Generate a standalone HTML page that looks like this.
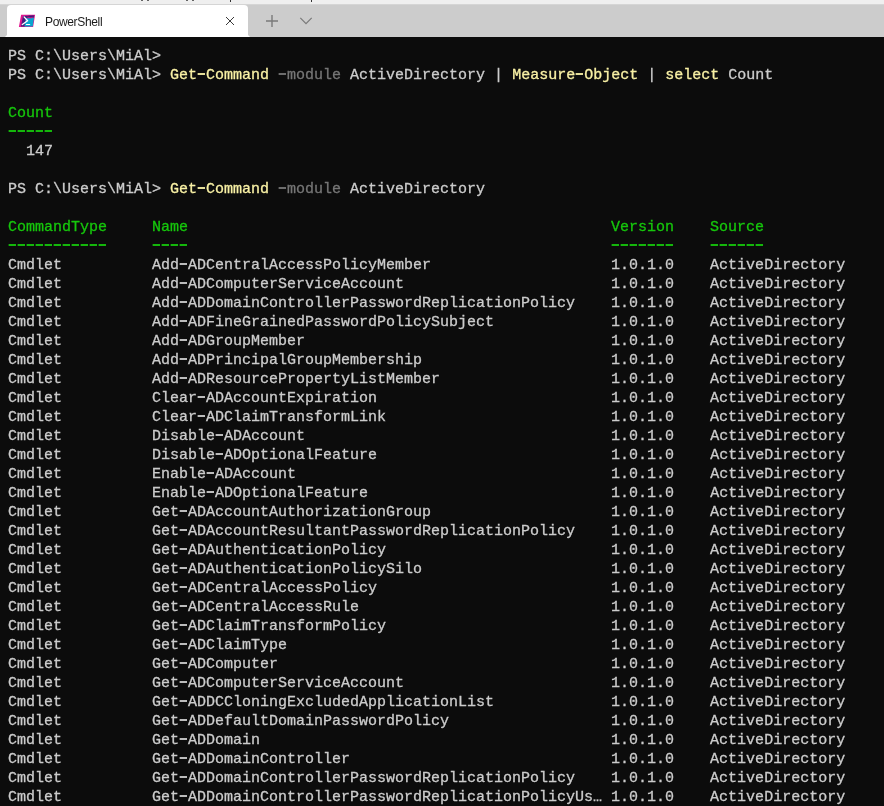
<!DOCTYPE html>
<html><head><meta charset="utf-8"><title>PowerShell</title>
<style>
html,body{margin:0;padding:0;}
body{width:884px;height:806px;overflow:hidden;background:#0c0c0c;position:relative;font-family:"Liberation Sans",sans-serif;}
#top{position:absolute;left:0;top:0;width:884px;height:4px;background:#efefef;}
#top i{position:absolute;top:0;width:2px;height:1px;background:#646464;}
#bar{position:absolute;left:0;top:4px;width:884px;height:33px;background:#cccccc;border-top:1px solid #d5d5d5;box-sizing:border-box;}
#tab{position:absolute;left:7px;top:5px;width:241px;height:32px;background:#fff;border-radius:4px 4px 0 0;}
#tab:before,#tab:after{content:"";position:absolute;bottom:0;width:3px;height:3px;}
#tab:before{left:-3px;background:radial-gradient(circle at 0 0,rgba(255,255,255,0) 2.6px,#fff 3.2px);}
#tab:after{right:-3px;background:radial-gradient(circle at 100% 0,rgba(255,255,255,0) 2.6px,#fff 3.2px);}
#title{will-change:transform;position:absolute;left:45px;top:14px;font-size:12px;line-height:16px;color:#1a1a1a;letter-spacing:-0.35px;}
svg{position:absolute;overflow:visible;}
#term{position:absolute;left:8px;top:47px;will-change:transform;width:876px;font-family:"Liberation Mono",monospace;font-size:15px;line-height:19px;color:#cccccc;white-space:pre;-webkit-text-stroke:0.3px;}
.r{height:19px;}
.h{display:inline-block;width:9px;height:19px;vertical-align:top;position:relative;}
.h:before{content:"";position:absolute;left:1px;top:7px;width:7px;height:2px;background:currentColor;opacity:.92;}
.h:after{content:"";position:absolute;left:0;top:7px;width:1px;height:2px;background:currentColor;opacity:.35;}
.y{color:#f9f1a5;}
.g{color:#767676;}
.gr{color:#16c60c;}
</style></head><body>
<div id="top"><i style="left:141px"></i><i style="left:147px"></i><i style="left:186px"></i><i style="left:192px"></i><i style="left:230px;height:2px;width:1px;background:#333"></i><i style="left:311px;height:2px;width:1px;background:#333"></i></div>
<div id="bar"></div>
<div id="tab"></div>
<svg id="icon" style="left:19px;top:15px" width="16" height="12" viewBox="0 0 16 12">
<path d="M2.1 -0.2 H16.1 L14.1 12 H-0.1 Z" fill="#e2168f"/>
<path d="M4.0 0.9 L15.2 0.5 L14.8 3 L7 3 L6 11.4 L1.9 11.4 Z" fill="#45207c"/>
<path d="M7 3 Q10.5 3.9 15.0 2.5 L13.7 11.5 L5.4 11.5 Z" fill="#0aa6cf"/>
<path d="M8.3 2.3 Q11 3.0 14.4 2.2" stroke="#d8148c" stroke-width="0.8" fill="none"/>
<path d="M9.5 1.1 Q12 1.5 14.6 0.9" stroke="#3a1470" stroke-width="0.7" fill="none"/>
<path d="M5.1 1.9 L8.6 5.7 L3.3 9.5" fill="none" stroke="#fff" stroke-width="1.35" stroke-linecap="round" stroke-linejoin="round"/>
<path d="M7.4 9.5 H10.7" fill="none" stroke="#fff" stroke-width="1.1" stroke-linecap="round"/>
</svg>
<div id="title">PowerShell</div>
<svg style="left:225px;top:16px" width="10" height="10" viewBox="0 0 10 10"><path d="M1 1 L9 9 M9 1 L1 9" stroke="#3a3a3a" stroke-width="1" fill="none"/></svg>
<svg style="left:266px;top:15px" width="12" height="12" viewBox="0 0 12 12"><path d="M6 0 V12 M0 6 H12" stroke="#7a7a7a" stroke-width="1.4" fill="none"/></svg>
<svg style="left:300px;top:17px" width="12" height="8" viewBox="0 0 12 8"><path d="M0.3 0.8 L6 6.6 L11.7 0.8" stroke="#7a7a7a" stroke-width="1.2" fill="none"/></svg>
<div id="term"><div class="r">PS C:\Users\MiAl&gt;</div><div class="r">PS C:\Users\MiAl&gt; <span class="y">Get<i class="h"></i>Command</span> <span class="g"><i class="h"></i>module</span> ActiveDirectory | <span class="y">Measure<i class="h"></i>Object</span> | <span class="y">select</span> Count</div><div class="r"></div><div class="r"><span class="gr">Count</span></div><div class="r"><span class="gr"><i class="h"></i><i class="h"></i><i class="h"></i><i class="h"></i><i class="h"></i></span></div><div class="r">  147</div><div class="r"></div><div class="r">PS C:\Users\MiAl&gt; <span class="y">Get<i class="h"></i>Command</span> <span class="g"><i class="h"></i>module</span> ActiveDirectory</div><div class="r"></div><div class="r"><span class="gr">CommandType     Name                                               Version    Source</span></div><div class="r"><span class="gr"><i class="h"></i><i class="h"></i><i class="h"></i><i class="h"></i><i class="h"></i><i class="h"></i><i class="h"></i><i class="h"></i><i class="h"></i><i class="h"></i><i class="h"></i>     <i class="h"></i><i class="h"></i><i class="h"></i><i class="h"></i>                                               <i class="h"></i><i class="h"></i><i class="h"></i><i class="h"></i><i class="h"></i><i class="h"></i><i class="h"></i>    <i class="h"></i><i class="h"></i><i class="h"></i><i class="h"></i><i class="h"></i><i class="h"></i></span></div><div class="r">Cmdlet          Add<i class="h"></i>ADCentralAccessPolicyMember                    1.0.1.0    ActiveDirectory</div><div class="r">Cmdlet          Add<i class="h"></i>ADComputerServiceAccount                       1.0.1.0    ActiveDirectory</div><div class="r">Cmdlet          Add<i class="h"></i>ADDomainControllerPasswordReplicationPolicy    1.0.1.0    ActiveDirectory</div><div class="r">Cmdlet          Add<i class="h"></i>ADFineGrainedPasswordPolicySubject             1.0.1.0    ActiveDirectory</div><div class="r">Cmdlet          Add<i class="h"></i>ADGroupMember                                  1.0.1.0    ActiveDirectory</div><div class="r">Cmdlet          Add<i class="h"></i>ADPrincipalGroupMembership                     1.0.1.0    ActiveDirectory</div><div class="r">Cmdlet          Add<i class="h"></i>ADResourcePropertyListMember                   1.0.1.0    ActiveDirectory</div><div class="r">Cmdlet          Clear<i class="h"></i>ADAccountExpiration                          1.0.1.0    ActiveDirectory</div><div class="r">Cmdlet          Clear<i class="h"></i>ADClaimTransformLink                         1.0.1.0    ActiveDirectory</div><div class="r">Cmdlet          Disable<i class="h"></i>ADAccount                                  1.0.1.0    ActiveDirectory</div><div class="r">Cmdlet          Disable<i class="h"></i>ADOptionalFeature                          1.0.1.0    ActiveDirectory</div><div class="r">Cmdlet          Enable<i class="h"></i>ADAccount                                   1.0.1.0    ActiveDirectory</div><div class="r">Cmdlet          Enable<i class="h"></i>ADOptionalFeature                           1.0.1.0    ActiveDirectory</div><div class="r">Cmdlet          Get<i class="h"></i>ADAccountAuthorizationGroup                    1.0.1.0    ActiveDirectory</div><div class="r">Cmdlet          Get<i class="h"></i>ADAccountResultantPasswordReplicationPolicy    1.0.1.0    ActiveDirectory</div><div class="r">Cmdlet          Get<i class="h"></i>ADAuthenticationPolicy                         1.0.1.0    ActiveDirectory</div><div class="r">Cmdlet          Get<i class="h"></i>ADAuthenticationPolicySilo                     1.0.1.0    ActiveDirectory</div><div class="r">Cmdlet          Get<i class="h"></i>ADCentralAccessPolicy                          1.0.1.0    ActiveDirectory</div><div class="r">Cmdlet          Get<i class="h"></i>ADCentralAccessRule                            1.0.1.0    ActiveDirectory</div><div class="r">Cmdlet          Get<i class="h"></i>ADClaimTransformPolicy                         1.0.1.0    ActiveDirectory</div><div class="r">Cmdlet          Get<i class="h"></i>ADClaimType                                    1.0.1.0    ActiveDirectory</div><div class="r">Cmdlet          Get<i class="h"></i>ADComputer                                     1.0.1.0    ActiveDirectory</div><div class="r">Cmdlet          Get<i class="h"></i>ADComputerServiceAccount                       1.0.1.0    ActiveDirectory</div><div class="r">Cmdlet          Get<i class="h"></i>ADDCCloningExcludedApplicationList             1.0.1.0    ActiveDirectory</div><div class="r">Cmdlet          Get<i class="h"></i>ADDefaultDomainPasswordPolicy                  1.0.1.0    ActiveDirectory</div><div class="r">Cmdlet          Get<i class="h"></i>ADDomain                                       1.0.1.0    ActiveDirectory</div><div class="r">Cmdlet          Get<i class="h"></i>ADDomainController                             1.0.1.0    ActiveDirectory</div><div class="r">Cmdlet          Get<i class="h"></i>ADDomainControllerPasswordReplicationPolicy    1.0.1.0    ActiveDirectory</div><div class="r">Cmdlet          Get<i class="h"></i>ADDomainControllerPasswordReplicationPolicyUs… 1.0.1.0    ActiveDirectory</div></div>
</body></html>
